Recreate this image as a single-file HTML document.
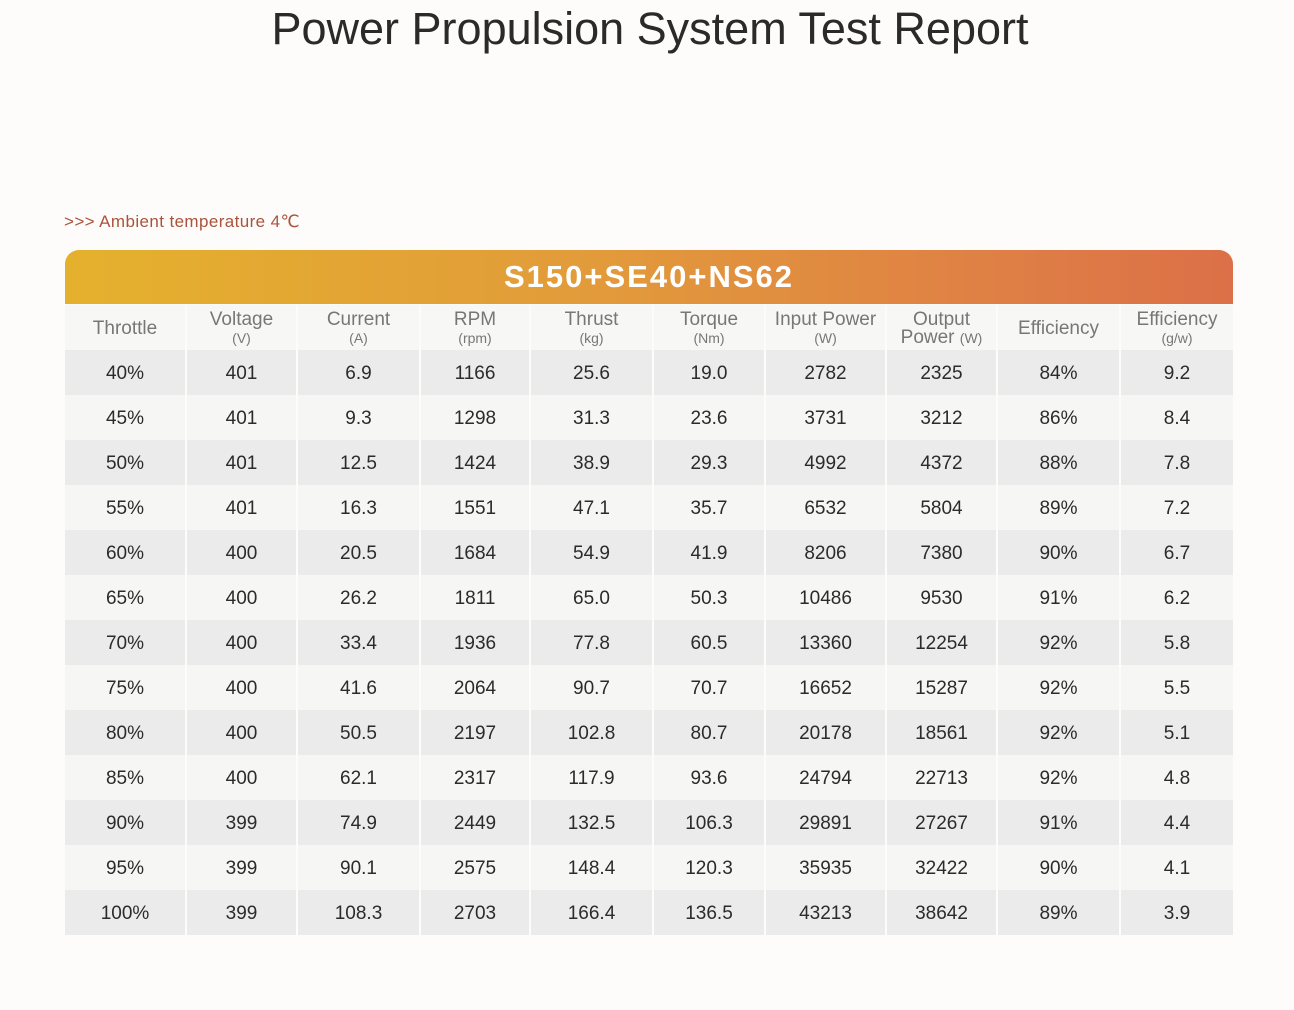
<!DOCTYPE html><html><head><meta charset="utf-8"><style>
body{margin:0;width:1294px;height:1010px;background:#fdfcfb;font-family:"Liberation Sans","DejaVu Sans",sans-serif;position:relative;overflow:hidden}
h1{position:absolute;top:3px;left:0;width:1300px;text-align:center;margin:0;font-weight:normal;font-size:45px;color:#2a2a2a}
.amb{position:absolute;left:64px;top:212px;font-size:17px;letter-spacing:0.4px;color:#a9533a}
.bar{position:absolute;left:65px;top:250px;width:1168px;height:54px;border-radius:14px 14px 0 0;background:linear-gradient(90deg,#e4b12d,#e29b3a 45%,#df7f45 80%,#dc7048);color:#fff;text-align:center;font-size:31px;line-height:54px;letter-spacing:2px;font-weight:bold}
table{position:absolute;left:65px;top:305px;border-collapse:collapse;table-layout:fixed;width:1168px}
td{text-align:center;color:#2b2b2b;font-size:19px;height:45px;padding:2px 0 0 0;border-right:2px solid #fdfcfb;border-bottom:0;box-sizing:border-box}
td:last-child{border-right:0}
tr.h td{background:#f7f7f6;color:#777;font-size:19px;line-height:18px;height:45px}
tr.h small{font-size:14px}
tr:nth-child(even) td{background:#ebebeb}
tr:nth-child(odd):not(.h) td{background:#f6f6f5}
</style></head><body>
<h1>Power Propulsion System Test Report</h1>
<div class="amb">&gt;&gt;&gt; Ambient temperature 4℃</div>
<div class="bar">S150+SE40+NS62</div>
<table>
<colgroup><col style="width:121px"><col style="width:111px"><col style="width:123px"><col style="width:110px"><col style="width:123px"><col style="width:112px"><col style="width:121px"><col style="width:111px"><col style="width:123px"><col style="width:113px"></colgroup>
<tr class="h"><td>Throttle</td><td>Voltage<br><small>(V)</small></td><td>Current<br><small>(A)</small></td><td>RPM<br><small>(rpm)</small></td><td>Thrust<br><small>(kg)</small></td><td>Torque<br><small>(Nm)</small></td><td>Input Power<br><small>(W)</small></td><td>Output<br>Power <small>(W)</small></td><td>Efficiency</td><td>Efficiency<br><small>(g/w)</small></td></tr>
<tr><td>40%</td><td>401</td><td>6.9</td><td>1166</td><td>25.6</td><td>19.0</td><td>2782</td><td>2325</td><td>84%</td><td>9.2</td></tr>
<tr><td>45%</td><td>401</td><td>9.3</td><td>1298</td><td>31.3</td><td>23.6</td><td>3731</td><td>3212</td><td>86%</td><td>8.4</td></tr>
<tr><td>50%</td><td>401</td><td>12.5</td><td>1424</td><td>38.9</td><td>29.3</td><td>4992</td><td>4372</td><td>88%</td><td>7.8</td></tr>
<tr><td>55%</td><td>401</td><td>16.3</td><td>1551</td><td>47.1</td><td>35.7</td><td>6532</td><td>5804</td><td>89%</td><td>7.2</td></tr>
<tr><td>60%</td><td>400</td><td>20.5</td><td>1684</td><td>54.9</td><td>41.9</td><td>8206</td><td>7380</td><td>90%</td><td>6.7</td></tr>
<tr><td>65%</td><td>400</td><td>26.2</td><td>1811</td><td>65.0</td><td>50.3</td><td>10486</td><td>9530</td><td>91%</td><td>6.2</td></tr>
<tr><td>70%</td><td>400</td><td>33.4</td><td>1936</td><td>77.8</td><td>60.5</td><td>13360</td><td>12254</td><td>92%</td><td>5.8</td></tr>
<tr><td>75%</td><td>400</td><td>41.6</td><td>2064</td><td>90.7</td><td>70.7</td><td>16652</td><td>15287</td><td>92%</td><td>5.5</td></tr>
<tr><td>80%</td><td>400</td><td>50.5</td><td>2197</td><td>102.8</td><td>80.7</td><td>20178</td><td>18561</td><td>92%</td><td>5.1</td></tr>
<tr><td>85%</td><td>400</td><td>62.1</td><td>2317</td><td>117.9</td><td>93.6</td><td>24794</td><td>22713</td><td>92%</td><td>4.8</td></tr>
<tr><td>90%</td><td>399</td><td>74.9</td><td>2449</td><td>132.5</td><td>106.3</td><td>29891</td><td>27267</td><td>91%</td><td>4.4</td></tr>
<tr><td>95%</td><td>399</td><td>90.1</td><td>2575</td><td>148.4</td><td>120.3</td><td>35935</td><td>32422</td><td>90%</td><td>4.1</td></tr>
<tr><td>100%</td><td>399</td><td>108.3</td><td>2703</td><td>166.4</td><td>136.5</td><td>43213</td><td>38642</td><td>89%</td><td>3.9</td></tr>
</table>
</body></html>
